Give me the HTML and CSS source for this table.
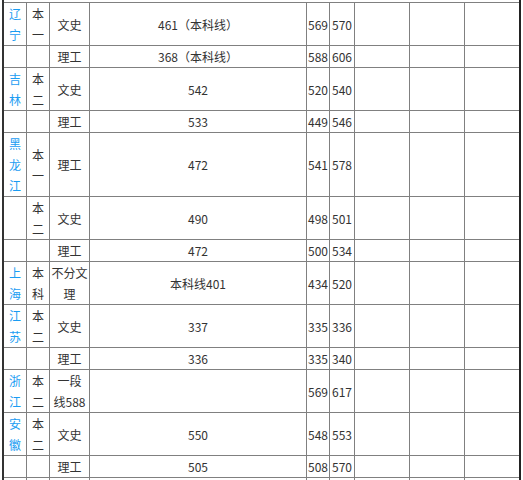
FILE: index.html
```html
<!DOCTYPE html>
<html lang="zh">
<head>
<meta charset="utf-8">
<title>分数线</title>
<link rel="stylesheet" href="styles.css">
</head>
<body>
<div class="wrap">
<table class="grid">
<colgroup>
<col class="c-prov"><col class="c-batch"><col class="c-type"><col class="c-line"><col class="c-min"><col class="c-max"><col class="c-wide"><col class="c-wide"><col class="c-last">
</colgroup>
<tbody>
<tr class="first">
<td class="prov">辽宁</td><td>本一</td><td>文史</td><td>461（本科线）</td><td>569</td><td>570</td><td></td><td></td><td></td>
</tr>
<tr>
<td></td><td></td><td>理工</td><td>368（本科线）</td><td>588</td><td>606</td><td></td><td></td><td></td>
</tr>
<tr>
<td class="prov">吉林</td><td>本二</td><td>文史</td><td>542</td><td>520</td><td>540</td><td></td><td></td><td></td>
</tr>
<tr>
<td></td><td></td><td>理工</td><td>533</td><td>449</td><td>546</td><td></td><td></td><td></td>
</tr>
<tr>
<td class="prov">黑龙江</td><td>本一</td><td>理工</td><td>472</td><td>541</td><td>578</td><td></td><td></td><td></td>
</tr>
<tr>
<td></td><td>本二</td><td>文史</td><td>490</td><td>498</td><td>501</td><td></td><td></td><td></td>
</tr>
<tr>
<td></td><td></td><td>理工</td><td>472</td><td>500</td><td>534</td><td></td><td></td><td></td>
</tr>
<tr>
<td class="prov">上海</td><td>本科</td><td>不分文理</td><td>本科线401</td><td>434</td><td>520</td><td></td><td></td><td></td>
</tr>
<tr>
<td class="prov">江苏</td><td>本二</td><td>文史</td><td>337</td><td>335</td><td>336</td><td></td><td></td><td></td>
</tr>
<tr>
<td></td><td></td><td>理工</td><td>336</td><td>335</td><td>340</td><td></td><td></td><td></td>
</tr>
<tr>
<td class="prov">浙江</td><td>本二</td><td>一段<br>线588</td><td></td><td>569</td><td>617</td><td></td><td></td><td></td>
</tr>
<tr>
<td class="prov">安徽</td><td>本二</td><td>文史</td><td>550</td><td>548</td><td>553</td><td></td><td></td><td></td>
</tr>
<tr>
<td></td><td></td><td>理工</td><td>505</td><td>508</td><td>570</td><td></td><td></td><td></td>
</tr>
<tr>
<td>&nbsp;</td><td>&nbsp;</td><td>&nbsp;</td><td>&nbsp;</td><td>&nbsp;</td><td>&nbsp;</td><td>&nbsp;</td><td>&nbsp;</td><td>&nbsp;</td>
</tr>
</tbody>
</table>
</div>
</body>
</html>
```
FILE: styles.css
```css
html, body {
  margin: 0;
  padding: 0;
  background: #ffffff;
  overflow: hidden;
}

.wrap {
  margin-left: 2px;
  width: 515px;
  padding-top: 2px;
  border-left: 2px solid #333333;
  border-right: 2px solid #222222;
}

.grid {
  width: 515px;
  table-layout: fixed;
  border-collapse: separate;
  border-spacing: 0;
  font-family: "Noto Sans CJK SC", "Noto Sans", sans-serif;
  font-size: 12px;
  line-height: 21px;
  color: #333333;
}

.c-prov { width: 23px; }
.c-batch { width: 23px; }
.c-type { width: 40px; }
.c-line { width: 217px; }
.c-min { width: 23px; }
.c-max { width: 25px; }
.c-wide { width: 55px; }
.c-last { width: 54px; }

.grid td {
  padding: 0;
  text-align: center;
  vertical-align: middle;
  border-right: 1px solid #808080;
  border-bottom: 1px solid #808080;
  white-space: normal;
  overflow: hidden;
}

.grid td:last-child {
  border-right: none;
}

.grid tr.first td {
  border-top: 1px solid #808080;
}

.grid td.prov {
  color: #1a9cf2;
}
```
